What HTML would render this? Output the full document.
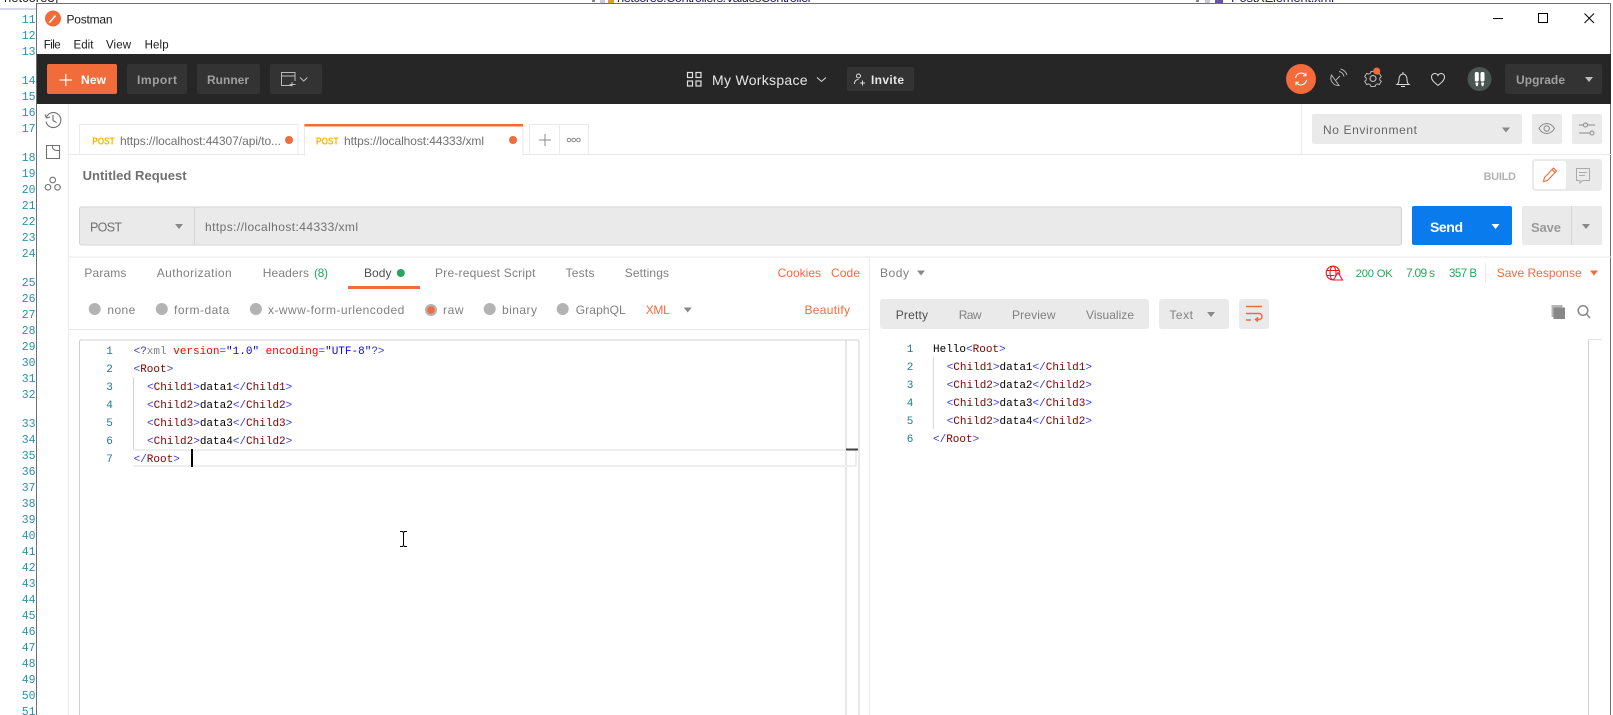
<!DOCTYPE html>
<html><head><meta charset="utf-8"><title>Postman</title>
<style>
html,body{margin:0;padding:0;background:#fff;width:1613px;height:715px;overflow:hidden}
svg{display:block}
text{font-family:"Liberation Sans",sans-serif;font-size:12px;fill:#808080;white-space:pre}
.g{font-family:"Liberation Mono",monospace;font-size:11.5px;fill:#2b91af;text-anchor:end}
.m{font-family:"Liberation Mono",monospace;font-size:11px;fill:#000;white-space:pre}
.n{font-family:"Liberation Mono",monospace;font-size:11px;fill:#237893;text-anchor:middle}
.p{fill:#3a3ae0}.t{fill:#800000}.a{fill:#f00000}.s{fill:#0a0ad8}.x{fill:#808080}
.o{fill:#f26b3a}.gr{fill:#26a65b}
</style></head><body>
<svg width="1613" height="715" viewBox="0 0 1613 715" xmlns="http://www.w3.org/2000/svg">
<rect width="1613" height="715" fill="#fff"/>
<!-- background IDE -->
<text x="4" y="2" style="font-size:13px;fill:#222">netcore3}</text>
<rect x="0" y="8" width="36" height="2" fill="#d8d8ec"/>
<rect x="592" y="0" width="3" height="2" fill="#888"/><rect x="600" y="0" width="5" height="3" fill="#c8c8dc"/>
<rect x="608" y="0" width="6" height="3" fill="#d9a030"/>
<text x="617" y="2" textLength="195" style="font-size:13px;fill:#26206e">netcore3.Controllers.ValuesController</text>
<rect x="1196" y="0" width="3" height="2" fill="#888"/><rect x="1205" y="0" width="5" height="3" fill="#c8c8dc"/>
<rect x="1215" y="0" width="8" height="3" fill="#6a4fb0"/>
<text x="1231" y="2" textLength="103" style="font-size:13px;fill:#26206e">PostXElement.xml</text>
<g>
<text class="g" x="35.5" y="23">11</text><text class="g" x="35.5" y="39">12</text><text class="g" x="35.5" y="55">13</text>
<text class="g" x="35.5" y="84">14</text><text class="g" x="35.5" y="100">15</text><text class="g" x="35.5" y="116">16</text><text class="g" x="35.5" y="132">17</text>
<text class="g" x="35.5" y="161">18</text><text class="g" x="35.5" y="177">19</text><text class="g" x="35.5" y="193">20</text><text class="g" x="35.5" y="209">21</text><text class="g" x="35.5" y="225">22</text><text class="g" x="35.5" y="241">23</text><text class="g" x="35.5" y="257">24</text>
<text class="g" x="35.5" y="286">25</text><text class="g" x="35.5" y="302">26</text><text class="g" x="35.5" y="318">27</text><text class="g" x="35.5" y="334">28</text><text class="g" x="35.5" y="350">29</text><text class="g" x="35.5" y="366">30</text><text class="g" x="35.5" y="382">31</text><text class="g" x="35.5" y="398">32</text>
<text class="g" x="35.5" y="427">33</text><text class="g" x="35.5" y="443">34</text><text class="g" x="35.5" y="459">35</text><text class="g" x="35.5" y="475">36</text><text class="g" x="35.5" y="491">37</text><text class="g" x="35.5" y="507">38</text><text class="g" x="35.5" y="523">39</text><text class="g" x="35.5" y="539">40</text><text class="g" x="35.5" y="555">41</text><text class="g" x="35.5" y="571">42</text><text class="g" x="35.5" y="587">43</text><text class="g" x="35.5" y="603">44</text><text class="g" x="35.5" y="619">45</text><text class="g" x="35.5" y="635">46</text><text class="g" x="35.5" y="651">47</text><text class="g" x="35.5" y="667">48</text><text class="g" x="35.5" y="683">49</text><text class="g" x="35.5" y="699">50</text><text class="g" x="35.5" y="715">51</text>
</g>
<!-- window frame -->
<rect x="36.5" y="3.5" width="1574" height="720" fill="#fff" stroke="#6e6e6e" stroke-width="1"/>
<!-- title bar -->
<circle cx="53" cy="18.5" r="8" fill="#f26b3a"/>
<path d="M49.5 22.5L55.5 15.5" stroke="#fff" stroke-width="1.6" fill="none"/><path d="M49 23l1-2" stroke="#ffd9c9" stroke-width="1"/>
<text x="66.5" y="23.5" textLength="46" style="fill:#1a1a1a">Postman</text>
<text x="43.7" y="48.5" textLength="17" style="fill:#1a1a1a;font-size:11.5px">File</text>
<text x="73.5" y="48.5" textLength="20" style="fill:#1a1a1a;font-size:11.5px">Edit</text>
<text x="106" y="48.5" textLength="25" style="fill:#1a1a1a;font-size:11.5px">View</text>
<text x="144.6" y="48.5" textLength="24" style="fill:#1a1a1a;font-size:11.5px">Help</text>
<rect x="1493" y="18" width="10" height="1" fill="#000"/>
<rect x="1538.5" y="13.5" width="9" height="9" fill="none" stroke="#000"/>
<path d="M1584.5 13.5l9.5 9.5M1594 13.5l-9.5 9.5" stroke="#000" fill="none"/>
<!-- dark bar -->
<rect x="37" y="54" width="1574" height="50" fill="#262626"/>
<rect x="47" y="64" width="70" height="30" rx="2" fill="#f26b3a"/>
<path d="M59.6 80h12.4M65.8 74v12" stroke="#fff" stroke-width="1.2" fill="none"/>
<text x="81" y="84" textLength="25" style="fill:#fff;font-weight:bold;font-size:12px">New</text>
<rect x="127" y="64" width="60" height="30" rx="2" fill="#333"/>
<text x="137" y="84" textLength="40" style="fill:#a0a0a0;font-weight:bold">Import</text>
<rect x="197" y="64" width="63" height="30" rx="2" fill="#333"/>
<text x="207" y="84" textLength="42" style="fill:#a0a0a0;font-weight:bold">Runner</text>
<rect x="270" y="64" width="52" height="30" rx="2" fill="#333"/>
<path d="M292.5 85.5h-11v-13h13.5v8.5M281.5 76h13.5M292 82v4.5M289.5 84.5h6" fill="none" stroke="#bbb"/>
<path d="M300 77.5l3.7 3.5 3.7-3.5" fill="none" stroke="#bbb"/>
<g fill="none" stroke="#e0e0e0" stroke-width="1.2"><rect x="687.5" y="72.5" width="5" height="5"/><rect x="696" y="72.5" width="5" height="5"/><rect x="687.5" y="81" width="5" height="5"/><rect x="696" y="81" width="5" height="5"/></g>
<text x="712" y="85" textLength="95.6" style="fill:#e6e6e6;font-size:14px">My Workspace</text>
<path d="M817 77.500l4.500 4 4.500-4" fill="none" stroke="#ddd"/>
<rect x="847" y="67" width="67" height="24" rx="2" fill="#333"/>
<circle cx="858.500" cy="76" r="2" fill="none" stroke="#ddd"/><path d="M854.500 84c0-3 1.500-4.500 4-4.500M860 83h5M862.500 80.500v5" fill="none" stroke="#ddd"/>
<text x="871" y="84" textLength="33" style="fill:#e6e6e6;font-weight:bold">Invite</text>
<!-- right icons -->
<circle cx="1301" cy="79" r="15" fill="#f26b3a"/>
<path d="M1295.500 78a5.800 5.800 0 0 1 10-3M1306.500 80a5.800 5.800 0 0 1-10 3" fill="none" stroke="#fff" stroke-width="1.100"/>
<path d="M1306 72.800v3h-3M1296 85.200v-3h3" fill="none" stroke="#fff" stroke-width="1"/>
<g fill="none" stroke="#b5b5b5"><path d="M1331.500 75a7.500 7.500 0 0 0 7.500 10.500zM1336 80l4-4M1339 71.500a6 6 0 0 1 5 5M1340.500 69a9 9 0 0 1 6.500 6"/></g>
<circle cx="1373" cy="78.500" r="3" fill="none" stroke="#b5b5b5" stroke-width="1.200"/>
<path d="M1371 71.500h4l.7 1.800 1.800.8 1.800-.7 2 3.300-1.500 1.300v2l1.500 1.300-2 3.300-1.800-.7-1.800.8-.7 1.800h-4l-.7-1.800-1.800-.8-1.800.7-2-3.300 1.500-1.300v-2l-1.500-1.300 2-3.300 1.800.7 1.800-.8z" fill="none" stroke="#b5b5b5"/>
<circle cx="1376.700" cy="71" r="3.500" fill="#f26b3a"/>
<path d="M1397 84.500h12c-1.500-1-2-2.500-2-5 0-3-1.500-5.500-4-5.500s-4 2.500-4 5.500c0 2.500-.5 4-2 5zM1401 86.500h4M1403 72v2" fill="none" stroke="#dcdcdc"/>
<path d="M1438 85.500c-3-2.500-6.500-5-6.500-8.500 0-2.200 1.700-3.500 3.400-3.500 1.300 0 2.500.8 3.100 2 .6-1.200 1.800-2 3.100-2 1.700 0 3.400 1.300 3.400 3.500 0 3.500-3.500 6-6.500 8.500z" fill="none" stroke="#dcdcdc"/>
<circle cx="1479.500" cy="79" r="12" fill="#4a5450"/>
<rect x="1474.800" y="72" width="4" height="9.500" rx="1.500" fill="#fff"/><rect x="1480.500" y="72" width="4" height="9.500" rx="1.500" fill="#fff"/>
<path d="M1475.300 82.500h3.200l-.6 3-1 1-1-1zM1481 82.500h3.200l-.6 3-1 1-1-1z" fill="#fff"/>
<rect x="1505" y="64" width="97" height="30" rx="2" fill="#333"/>
<text x="1516" y="84" textLength="49" style="fill:#a0a0a0;font-weight:bold">Upgrade</text>
<path d="M1585 77h8l-4 5z" fill="#bdbdbd"/>
<!-- sidebar -->
<rect x="68" y="104" width="1" height="611" fill="#eaeaea"/>
<g fill="none" stroke="#707070" stroke-width="1.100">
<path d="M46.500 117a7.500 7.500 0 1 1-.5 4.500M45 114.500l1.500 3.500 3.500-1M53 115v5.500l3.500 2"/>
<path d="M46.500 145.500h13v13h-13zM52.500 145.500v1.500c0 2 2 3.500 4 3.500h3"/>
<circle cx="52.700" cy="180" r="2.800"/><circle cx="48" cy="187.300" r="2.800"/><circle cx="57.500" cy="187.300" r="2.800"/>
</g>
<!-- tabs -->
<rect x="69" y="154" width="1542" height="1" fill="#eaeaea"/>
<rect x="79.500" y="124.500" width="218.500" height="30" fill="#fff" stroke="#eaeaea"/>
<rect x="304.500" y="124.500" width="218.500" height="31" fill="#fff" stroke="#eaeaea"/>
<rect x="305" y="155" width="218" height="1" fill="#fff"/>
<rect x="304.500" y="124" width="218.500" height="2.500" fill="#f26b3a"/>
<text x="92.300" y="144.500" textLength="22.400" lengthAdjust="spacingAndGlyphs" style="fill:#ffb400;font-weight:bold;font-size:10px">POST</text>
<text x="120" y="145" textLength="161" style="font-size:12px;fill:#707070">https://localhost:44307/api/to...</text>
<circle cx="289" cy="140" r="4" fill="#f26b3a"/>
<text x="316" y="144.500" textLength="22.500" lengthAdjust="spacingAndGlyphs" style="fill:#ffb400;font-weight:bold;font-size:10px">POST</text>
<text x="344" y="145" textLength="140" style="font-size:12px;fill:#707070">https://localhost:44333/xml</text>
<circle cx="513" cy="140" r="4" fill="#f26b3a"/>
<path d="M529.500 154.500v-30h58.500l.5.500v29.500M559.500 124.500v30" fill="none" stroke="#eaeaea"/>
<path d="M539 140h12M545 134v12" stroke="#888" fill="none"/>
<g fill="none" stroke="#888"><circle cx="569" cy="140" r="1.800"/><circle cx="573.700" cy="140" r="1.800"/><circle cx="578.400" cy="140" r="1.800"/></g>
<!-- env -->
<rect x="1301" y="104" width="1" height="50" fill="#eaeaea"/>
<rect x="1312" y="114" width="210" height="30" rx="2" fill="#eaeaea"/>
<text x="1323" y="134" textLength="94" style="fill:#666">No Environment</text>
<path d="M1502 127.500h8l-4 5z" fill="#888"/>
<rect x="1532" y="114" width="30" height="30" rx="2" fill="#eaeaea"/>
<path d="M1539 128.500c2-3.500 4.800-5 7.700-5s5.700 1.500 7.800 5c-2.100 3.500-4.900 5-7.800 5s-5.700-1.500-7.700-5z" fill="none" stroke="#888"/><circle cx="1546.700" cy="128.500" r="2.700" fill="none" stroke="#888"/>
<rect x="1572" y="114" width="30" height="30" rx="2" fill="#eaeaea"/>
<g fill="none" stroke="#888"><path d="M1579 125h4M1588 125h7M1579 133h11"/><circle cx="1585.500" cy="125" r="2"/><circle cx="1592" cy="133" r="2"/></g>
<!-- request name -->
<text x="82.600" y="180" textLength="104" style="font-size:13px;font-weight:bold;fill:#707070">Untitled Request</text>
<text x="1483.500" y="180" textLength="32.500" style="font-size:11px;font-weight:bold;fill:#b3b3b3">BUILD</text>
<rect x="1532" y="159" width="70" height="32" rx="3" fill="#eaeaea"/>
<rect x="1534" y="161" width="32" height="28" rx="2" fill="#fff"/>
<path d="M1543.500 181.500l1-4 9-9.500 3 3-9 9.500zM1552 169.500l3 3" fill="none" stroke="#f26b3a" stroke-width="1.100"/>
<path d="M1576.500 168.500h13v12h-7l-2.500 2.500v-2.500h-3.500zM1579 172.500h8M1579 175.500h6" fill="none" stroke="#aaa"/>
<!-- URL -->
<rect x="79.500" y="207" width="1322" height="38" rx="2" fill="#eaeaea" stroke="#d4d4d4"/>
<rect x="194" y="207" width="1" height="38" fill="#d4d4d4"/>
<text x="90" y="231.500" textLength="32" style="font-size:12.500px;fill:#707070">POST</text>
<path d="M175 224h8l-4 5z" fill="#888"/>
<text x="205" y="231" textLength="153" style="font-size:12px;fill:#707070">https://localhost:44333/xml</text>
<rect x="1412" y="206" width="100" height="39" rx="2" fill="#097bed"/>
<text x="1430" y="232" textLength="33" style="font-size:14px;font-weight:bold;fill:#fff">Send</text>
<path d="M1491.500 224h8l-4 5z" fill="#fff"/>
<rect x="1522" y="206" width="80" height="39" rx="2" fill="#eaeaea"/>
<rect x="1571" y="206" width="1" height="39" fill="#d4d4d4"/>
<text x="1531" y="232" textLength="30" style="font-size:13px;font-weight:bold;fill:#9a9a9a">Save</text>
<path d="M1582 224h8l-4 5z" fill="#888"/>
<!-- request tabs -->
<rect x="69" y="256.500" width="1542" height="1" fill="#eaeaea"/>
<rect x="869" y="257" width="1" height="458" fill="#eaeaea"/>
<g>
<text x="84.400" y="277" textLength="42">Params</text>
<text x="156.700" y="277" textLength="75">Authorization</text>
<text x="262.700" y="277" textLength="46.300">Headers</text>
<text x="314" y="277" textLength="14" class="gr">(8)</text>
<text x="364" y="277" textLength="27.500" style="fill:#505050">Body</text>
<circle cx="400.800" cy="273" r="4" fill="#26a65b"/>
<rect x="348" y="286" width="72" height="3" fill="#f26b3a"/>
<text x="435" y="277" textLength="100.500">Pre-request Script</text>
<text x="565.500" y="277" textLength="29">Tests</text>
<text x="624.700" y="277" textLength="44.300">Settings</text>
<text x="777.600" y="277" textLength="43.400" class="o">Cookies</text>
<text x="831" y="277" textLength="29" class="o">Code</text>
</g>
<!-- radios -->
<g fill="#b3b3b3"><circle cx="94.700" cy="309" r="6"/><circle cx="161.800" cy="309" r="6"/><circle cx="255.900" cy="309" r="6"/><circle cx="431" cy="310" r="6"/><circle cx="489.700" cy="309" r="6"/><circle cx="562.700" cy="309" r="6"/></g>
<circle cx="431" cy="310" r="3.800" fill="#f26b3a"/>
<text x="107.400" y="314" textLength="27.900">none</text>
<text x="174" y="314" textLength="55.300">form-data</text>
<text x="268" y="314" textLength="136.300">x-www-form-urlencoded</text>
<text x="443" y="314" textLength="20.500">raw</text>
<text x="502" y="314" textLength="35">binary</text>
<text x="575.800" y="314" textLength="49.900">GraphQL</text>
<text x="645.700" y="314" textLength="24.100" class="o">XML</text>
<path d="M683.700 307.500h8l-4 5z" fill="#888"/>
<text x="804.500" y="314" textLength="45.500" class="o">Beautify</text>
<rect x="69" y="329" width="800" height="1" fill="#eaeaea"/>
<!-- editor -->
<path d="M79.500 715V342q0-2 2-2H857q2 0 2 2V715" fill="none" stroke="#d0d0d0"/>
<rect x="845.500" y="340" width="1" height="375" fill="#cfcfcf"/>
<rect x="133" y="449" width="724" height="2" fill="#eeeeee"/>
<rect x="133" y="465" width="724" height="2" fill="#eeeeee"/>
<rect x="855" y="449" width="2" height="18" fill="#eeeeee"/>
<rect x="846" y="448.500" width="12" height="2" fill="#444"/>
<rect x="133" y="377" width="1" height="72" fill="#d0d0d0"/>
<rect x="191" y="449" width="2" height="18" fill="#000"/>
<text class="n" x="109.500" y="354">1</text><text class="n" x="109.500" y="372">2</text><text class="n" x="109.500" y="390">3</text><text class="n" x="109.500" y="408">4</text><text class="n" x="109.500" y="426">5</text><text class="n" x="109.500" y="444">6</text><text class="n" x="109.500" y="462">7</text>
<text class="m" x="133.600" y="354" xml:space="preserve"><tspan class="p">&lt;?</tspan><tspan class="x">xml</tspan> <tspan class="a">version</tspan><tspan class="p">=</tspan><tspan class="s">"1.0"</tspan> <tspan class="a">encoding</tspan><tspan class="p">=</tspan><tspan class="s">"UTF-8"</tspan><tspan class="p">?&gt;</tspan></text>
<text class="m" x="133.600" y="372"><tspan class="p">&lt;</tspan><tspan class="t">Root</tspan><tspan class="p">&gt;</tspan></text>
<text class="m" x="147" y="390"><tspan class="p">&lt;</tspan><tspan class="t">Child1</tspan><tspan class="p">&gt;</tspan>data1<tspan class="p">&lt;/</tspan><tspan class="t">Child1</tspan><tspan class="p">&gt;</tspan></text>
<text class="m" x="147" y="408"><tspan class="p">&lt;</tspan><tspan class="t">Child2</tspan><tspan class="p">&gt;</tspan>data2<tspan class="p">&lt;/</tspan><tspan class="t">Child2</tspan><tspan class="p">&gt;</tspan></text>
<text class="m" x="147" y="426"><tspan class="p">&lt;</tspan><tspan class="t">Child3</tspan><tspan class="p">&gt;</tspan>data3<tspan class="p">&lt;/</tspan><tspan class="t">Child3</tspan><tspan class="p">&gt;</tspan></text>
<text class="m" x="147" y="444"><tspan class="p">&lt;</tspan><tspan class="t">Child2</tspan><tspan class="p">&gt;</tspan>data4<tspan class="p">&lt;/</tspan><tspan class="t">Child2</tspan><tspan class="p">&gt;</tspan></text>
<text class="m" x="133.600" y="462"><tspan class="p">&lt;/</tspan><tspan class="t">Root</tspan><tspan class="p">&gt;</tspan></text>
<!-- mouse I-beam -->
<path d="M400 531.500h2.500l1 1 1-1h2.500M400 546.500h2.500l1-1 1 1h2.500M403.500 532v13" fill="none" stroke="#000"/>
<!-- response header -->
<text x="880" y="277" textLength="29">Body</text>
<path d="M917 270.500h8l-4 5z" fill="#888"/>
<g fill="none" stroke="#e02020" stroke-width="1.100"><circle cx="1333" cy="273" r="6.800"/><ellipse cx="1333" cy="273" rx="3" ry="6.800"/><path d="M1326.500 270.500h13M1326.500 275.500h8"/></g>
<path d="M1338 272.500l4.500 7.500h-9z" fill="#fff" stroke="#e02020" stroke-width="1.100"/>
<text x="1355.700" y="277" textLength="37" class="gr" style="font-size:11.200px">200 OK</text>
<text x="1406" y="277" textLength="29" class="gr">7.09 s</text>
<text x="1449" y="277" textLength="28" class="gr" style="font-size:11.500px">357 B</text>
<rect x="1485" y="263" width="1" height="20" fill="#eaeaea"/>
<text x="1496.700" y="277" textLength="85" class="o">Save Response</text>
<path d="M1590 270.500h8l-4 5z" fill="#f26b3a"/>
<rect x="880" y="299" width="269" height="30" rx="3" fill="#eaeaea"/>
<text x="895.700" y="319" textLength="32.300" style="fill:#505050">Pretty</text>
<text x="958.700" y="319" textLength="22.800">Raw</text>
<text x="1012" y="319" textLength="43.500">Preview</text>
<text x="1086" y="319" textLength="48">Visualize</text>
<rect x="1159" y="299" width="70" height="30" rx="3" fill="#eaeaea"/>
<text x="1169.400" y="319" textLength="23.600">Text</text>
<path d="M1207 312h8l-4 5z" fill="#888"/>
<rect x="1239" y="299" width="30" height="30" rx="3" fill="#eaeaea"/>
<path d="M1246 306.500h16M1246 313.500h13c4 0 4 6 0 6h-3M1246 320h5M1258 317.500l-2.500 2 2.500 2" fill="none" stroke="#f26b3a" stroke-width="1.500"/>
<rect x="1551.500" y="305" width="11" height="12" fill="#b5b5b5"/>
<rect x="1553.500" y="307.500" width="11.500" height="11.500" fill="#888"/>
<circle cx="1583" cy="310.500" r="4.800" fill="none" stroke="#888" stroke-width="1.500"/><path d="M1586.500 314l3.500 4" stroke="#888" stroke-width="1.500" fill="none"/>
<!-- response code -->
<rect x="933" y="357" width="1" height="72" fill="#d8d8d8"/>
<text class="n" x="910" y="352">1</text><text class="n" x="910" y="370">2</text><text class="n" x="910" y="388">3</text><text class="n" x="910" y="406">4</text><text class="n" x="910" y="424">5</text><text class="n" x="910" y="442">6</text>
<text class="m" x="933" y="352">Hello<tspan class="p">&lt;</tspan><tspan class="t">Root</tspan><tspan class="p">&gt;</tspan></text>
<text class="m" x="946.700" y="370"><tspan class="p">&lt;</tspan><tspan class="t">Child1</tspan><tspan class="p">&gt;</tspan>data1<tspan class="p">&lt;/</tspan><tspan class="t">Child1</tspan><tspan class="p">&gt;</tspan></text>
<text class="m" x="946.700" y="388"><tspan class="p">&lt;</tspan><tspan class="t">Child2</tspan><tspan class="p">&gt;</tspan>data2<tspan class="p">&lt;/</tspan><tspan class="t">Child2</tspan><tspan class="p">&gt;</tspan></text>
<text class="m" x="946.700" y="406"><tspan class="p">&lt;</tspan><tspan class="t">Child3</tspan><tspan class="p">&gt;</tspan>data3<tspan class="p">&lt;/</tspan><tspan class="t">Child3</tspan><tspan class="p">&gt;</tspan></text>
<text class="m" x="946.700" y="424"><tspan class="p">&lt;</tspan><tspan class="t">Child2</tspan><tspan class="p">&gt;</tspan>data4<tspan class="p">&lt;/</tspan><tspan class="t">Child2</tspan><tspan class="p">&gt;</tspan></text>
<text class="m" x="933" y="442"><tspan class="p">&lt;/</tspan><tspan class="t">Root</tspan><tspan class="p">&gt;</tspan></text>
<rect x="1588" y="339" width="1" height="376" fill="#d0d0d0"/>
<rect x="1588" y="339" width="14" height="1" fill="#e4e4e4"/>
</svg>
</body></html>
